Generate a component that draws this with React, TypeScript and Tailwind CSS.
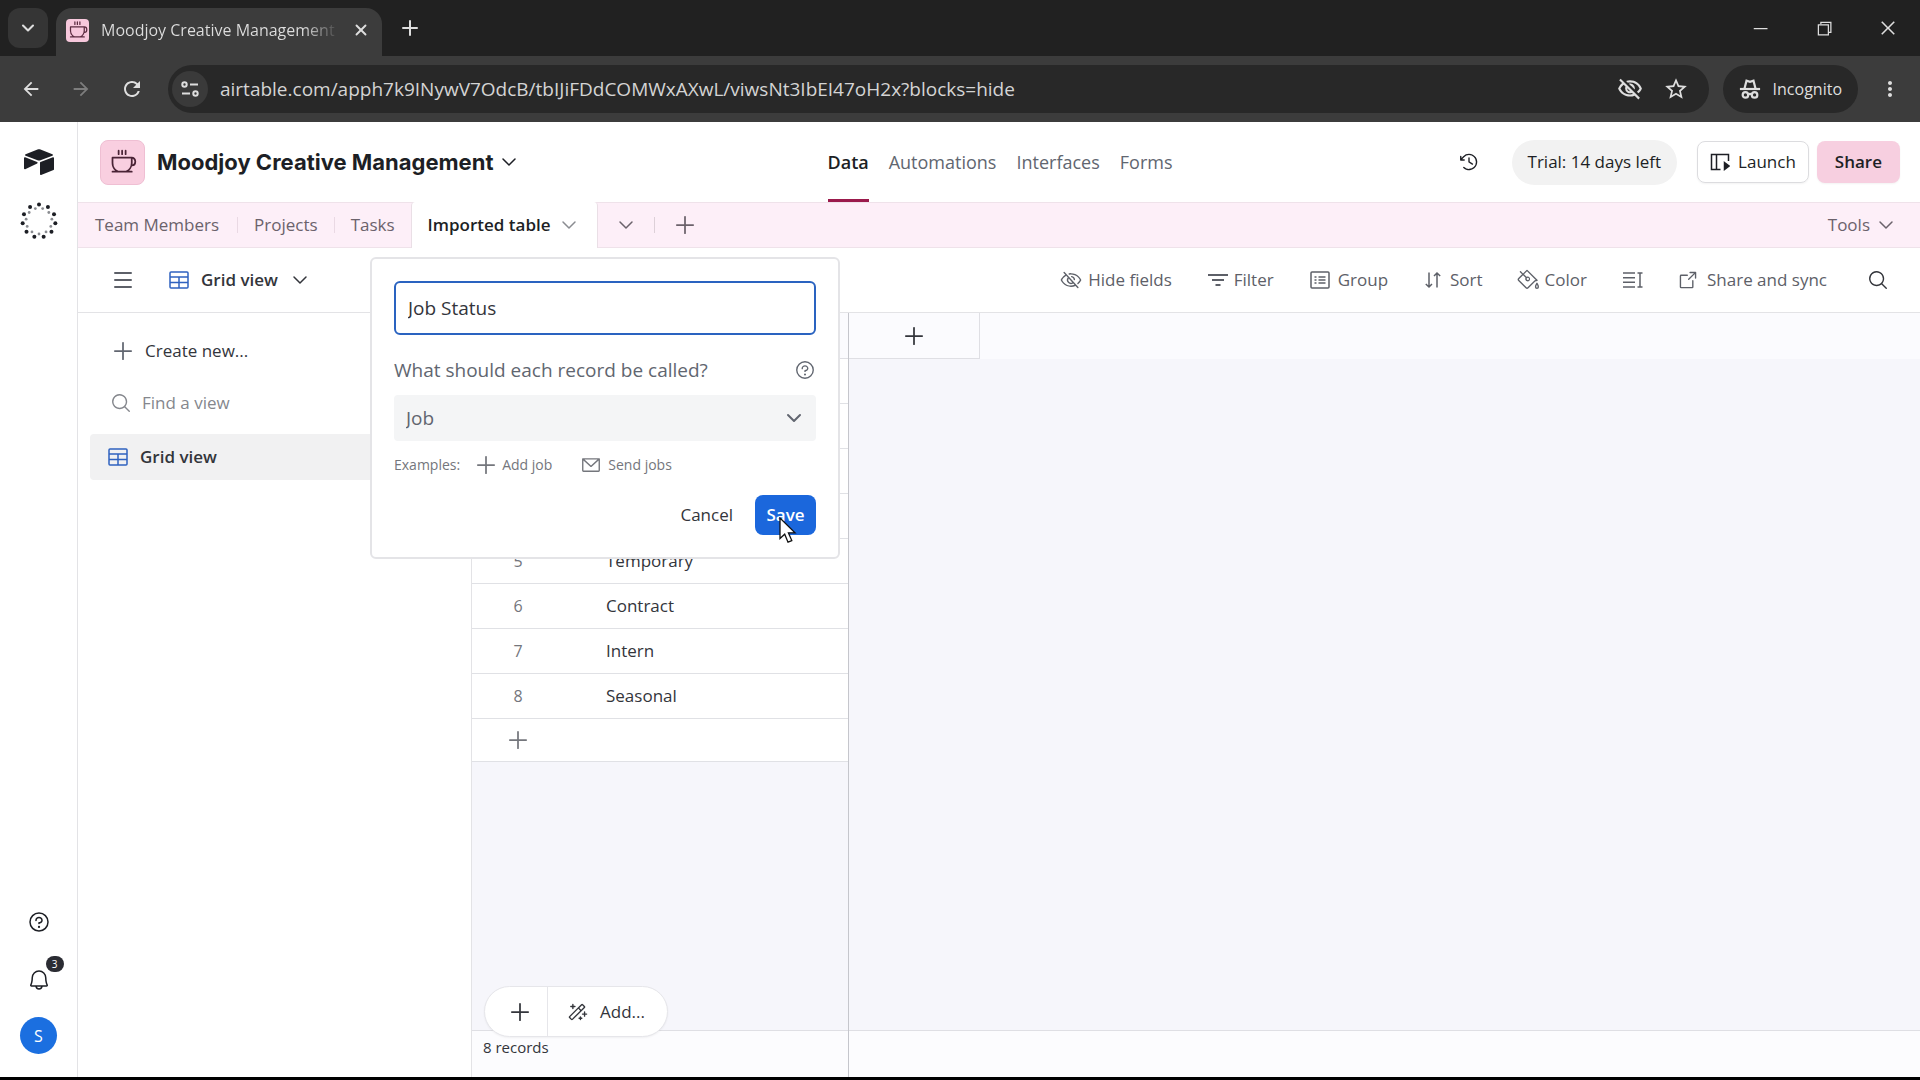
import { useState } from 'react';
import {
  PiArrowSquareOut,
  PiBell,
  PiClockCounterClockwise,
  PiCoffee,
  PiEnvelopeSimple,
  PiEyeSlash,
  PiMagicWand,
  PiMagnifyingGlass,
  PiPaintBucket,
  PiQuestion,
} from 'react-icons/pi';
import { MdArrowBack, MdArrowForward, MdMoreVert, MdOutlineVisibilityOff, MdRefresh, MdStarBorder } from 'react-icons/md';
import { VscChromeClose, VscChromeMinimize, VscChromeRestore } from 'react-icons/vsc';
import { ChevronDown, Menu, Plus, X } from 'lucide-react';

const uiFont = "font-['Open_Sans','Noto_Sans',sans-serif]";

const records = [
  { id: 1, name: '' },
  { id: 2, name: '' },
  { id: 3, name: '' },
  { id: 4, name: '' },
  { id: 5, name: 'Temporary' },
  { id: 6, name: 'Contract' },
  { id: 7, name: 'Intern' },
  { id: 8, name: 'Seasonal' },
];

function IncognitoIcon() {
  return (
    <svg viewBox="0 0 24 24" className="size-[22px]" fill="none" stroke="currentColor" strokeWidth="2.400">
      <path d="M1 12h22" />
      <path d="M6 11.500 8.200 3l3.800 1.200L15.800 3l2.200 8.500" />
      <circle cx="7" cy="18.500" r="3" />
      <circle cx="17" cy="18.500" r="3" />
      <path d="M10 18q2-1.200 4 0" />
    </svg>
  );
}

function TuneIcon() {
  return (
    <svg viewBox="0 0 20 20" className="size-5" fill="none" stroke="currentColor" strokeWidth="2">
      <circle cx="4.500" cy="5.500" r="2.200" />
      <path d="M10 5.500h8" />
      <circle cx="15.500" cy="14.500" r="2.200" />
      <path d="M2 14.500h8" />
    </svg>
  );
}

function AirtableLogo() {
  return (
    <svg viewBox="0 0 32 28" className="h-7 w-8" fill="currentColor">
      <path d="M14.500 1.500 2.600 6.200c-.7.300-.7 1.200 0 1.500l11.900 4.500c1 .4 2 .4 3 0l11.900-4.500c.7-.3.700-1.200 0-1.500L17.500 1.500c-1-.4-2-.4-3 0Z" />
      <path d="M17 14.800v11.400c0 .6.600.9 1.100.7l12.400-4.900c.3-.1.500-.4.500-.7V9.900c0-.6-.6-.9-1.100-.7l-12.400 4.900c-.3.100-.5.400-.5.700Z" />
      <path d="m14.200 15.400-3.700 1.800-8.300 4c-.5.200-1.200-.1-1.200-.7V10c0-.6.600-1 1.200-.7l11.900 4.700c.6.300.7 1.100.1 1.400Z" />
    </svg>
  );
}

function DottedRing() {
  const step = (Math.PI * 2) / 11;
  const angles = Array.from({ length: 11 }, (_, i) => i * step - Math.PI / 2);
  return (
    <svg viewBox="0 0 40 40" className="size-10">
      {angles.map((a) => (
        <g key={a}>
          <circle cx={20 + 16.500 * Math.cos(a)} cy={20 + 16.500 * Math.sin(a)} r="2" fill="#1d1f25" />
          <circle cx={20 + 13 * Math.cos(a + step / 2)} cy={20 + 13 * Math.sin(a + step / 2)} r="1.400" fill="#8a8c91" />
        </g>
      ))}
    </svg>
  );
}

function GridIcon() {
  return (
    <svg viewBox="0 0 20 18" className="h-[18px] w-5" fill="none" stroke="#2f62c0" strokeWidth="1.500">
      <rect x="1" y="1" width="18" height="16" rx="1" />
      <path d="M1 6h18M1 11.500h18M10 6v11" />
    </svg>
  );
}

function GroupIcon() {
  return (
    <svg viewBox="0 0 20 18" className="h-[18px] w-5" fill="none" stroke="currentColor" strokeWidth="1.500">
      <rect x="1" y="1" width="18" height="16" rx="1" />
      <path d="M4.500 6h2M8.500 6h7M4.500 9h2M8.500 9h7M4.500 12h2M8.500 12h7" />
    </svg>
  );
}

function FilterIcon() {
  return (
    <svg viewBox="0 0 20 14" className="h-3.5 w-5" fill="none" stroke="currentColor" strokeWidth="1.800">
      <path d="M0 2h20M4 7h12M7.500 12h5" />
    </svg>
  );
}

function SortIcon() {
  return (
    <svg viewBox="0 0 18 18" className="size-[18px]" fill="none" stroke="currentColor" strokeWidth="1.500">
      <path d="M5 1.500V16M1.800 13 5 16l3-3M13 16.500V2M10 5l3-3 3.200 3" />
    </svg>
  );
}

function RowHeightIcon() {
  return (
    <svg viewBox="0 0 20 18" className="h-[18px] w-5" fill="none" stroke="currentColor" strokeWidth="1.500">
      <path d="M0 2h12M0 6.700h12M0 11.300h12M0 16h12M17 2v14M14.500 2h5M14.500 16h5" />
    </svg>
  );
}

function LaunchIcon() {
  return (
    <svg viewBox="0 0 20 18" className="h-[18px] w-5" fill="none" stroke="currentColor" strokeWidth="1.500">
      <path d="M10.500 16.500H1.500v-15h17v6.500M6.500 1.500v15" />
      <path d="m14.500 9.500 4.500 3.500-4.500 3.500Z" fill="currentColor" />
    </svg>
  );
}

function BrowserChrome() {
  return (
    <header className="shrink-0 bg-[#212121] text-[#dedede]">
      <div className="flex h-14 items-end">
        <button aria-label="Search tabs" className="mb-2 ml-2 flex h-10 w-10 items-center justify-center rounded-xl bg-[#353535]">
          <ChevronDown className="size-5" strokeWidth={2.5} />
        </button>
        <div className="ml-2 flex h-12 w-[326px] items-center rounded-t-2xl bg-[#3c3c3c] pr-3 pb-1 pl-2.5">
          <span className="flex size-[23px] items-center justify-center rounded bg-[#f7c8dc] text-[#5b2b40]">
            <PiCoffee className="size-5" />
          </span>
          <span className="ml-3 flex-1 bg-linear-to-r from-[#dedede] from-85% to-[#3c3c3c] bg-clip-text text-base whitespace-nowrap text-transparent">
            Moodjoy Creative Management
          </span>
          <button aria-label="Close tab" className="ml-3">
            <X className="size-[18px]" strokeWidth={2.5} />
          </button>
        </div>
        <button aria-label="New tab" className="mb-4 ml-4">
          <Plus className="size-6" />
        </button>
        <div className="mb-[18px] ml-auto flex items-center gap-11 pr-[22px]">
          <button aria-label="Minimize"><VscChromeMinimize className="size-5" /></button>
          <button aria-label="Restore"><VscChromeRestore className="size-5" /></button>
          <button aria-label="Close"><VscChromeClose className="size-5" /></button>
        </div>
      </div>
      <div className="flex h-[66px] items-center bg-[#3c3c3c] pr-[18px] pl-5">
        <button aria-label="Back"><MdArrowBack className="size-[22px]" /></button>
        <button aria-label="Forward" className="ml-7 text-[#7d7d7d]"><MdArrowForward className="size-[22px]" /></button>
        <button aria-label="Reload" className="ml-7"><MdRefresh className="size-6" /></button>
        <div className="ml-6 flex h-12 flex-1 items-center rounded-full bg-[#282828] pr-5 pl-1">
          <button aria-label="Site information" className="flex size-9 items-center justify-center rounded-full bg-[#3a3a3a]">
            <TuneIcon />
          </button>
          <input
            aria-label="Address"
            className="ml-3 min-w-0 flex-1 bg-transparent text-[19px] text-[#d4d4d4] outline-none"
            defaultValue="airtable.com/apph7k9INywV7OdcB/tbIJiFDdCOMWxAXwL/viwsNt3IbEI47oH2x?blocks=hide"
          />
          <button aria-label="Third-party cookies blocked"><MdOutlineVisibilityOff className="size-[26px]" /></button>
          <button aria-label="Bookmark" className="ml-5"><MdStarBorder className="size-[26px]" /></button>
        </div>
        <button className="ml-3.5 flex h-12 items-center gap-3 rounded-full bg-[#282828] px-4 text-base">
          <IncognitoIcon />
          Incognito
        </button>
        <button aria-label="Menu" className="ml-5"><MdMoreVert className="size-6" /></button>
      </div>
    </header>
  );
}

function NavRail() {
  return (
    <nav className="flex w-[78px] shrink-0 flex-col items-center border-r border-[#e3e3e6] pt-[26px] pb-[23px] text-[#1d1f25]">
      <a href="#home" aria-label="Home"><AirtableLogo /></a>
      <div className="mt-[25px]"><DottedRing /></div>
      <button aria-label="Help" className="mt-auto"><PiQuestion className="size-6" /></button>
      <button aria-label="Notifications" className="relative mt-[34px]">
        <PiBell className="size-6" />
        <span className="absolute -top-3 left-[19px] flex h-4 w-[18px] items-center justify-center rounded-full bg-[#2b2c33] text-[10px] text-white">
          3
        </span>
      </button>
      <button className="mt-[25px] flex size-[37px] items-center justify-center rounded-full bg-[#1b6fe0] text-base text-white">S</button>
    </nav>
  );
}

function BaseHeader() {
  return (
    <div className="grid h-20 shrink-0 grid-cols-[1fr_auto_1fr] items-center pr-5 pl-[22px] text-[#1d1f25]">
      <div className="flex items-center">
        <span className="flex size-[45px] items-center justify-center rounded-lg border border-[#efbfd3] bg-[#f9cfe0] text-[#4a2436]">
          <PiCoffee className="size-7" />
        </span>
        <button className="ml-3 flex items-center gap-1 font-['Inter','Open_Sans',sans-serif] text-[22px] font-bold">
          Moodjoy Creative Management
          <ChevronDown className="size-6" strokeWidth={1.5} />
        </button>
      </div>
      <div className="flex h-full items-stretch gap-5 text-lg text-[#616670]">
        <a href="#data" className="flex items-center border-y-[3px] border-t-transparent border-b-[#9b1a4c] font-semibold text-[#1d1f25]">Data</a>
        <a href="#automations" className="flex items-center">Automations</a>
        <a href="#interfaces" className="flex items-center">Interfaces</a>
        <a href="#forms" className="flex items-center">Forms</a>
      </div>
      <div className="flex items-center justify-end">
        <button aria-label="History"><PiClockCounterClockwise className="size-[22px]" /></button>
        <span className="ml-8 flex h-[45px] items-center rounded-full bg-[#f2f2f2] px-4 text-[17px]">Trial: 14 days left</span>
        <button className="ml-5 flex h-[42px] items-center gap-2 rounded-lg border border-[#dcdcdf] px-3 text-[17px] shadow-xs">
          <LaunchIcon />
          Launch
        </button>
        <button className="ml-2 h-[42px] rounded-lg bg-[#f7cfe0] px-[18px] text-[17px] font-semibold shadow-xs">Share</button>
      </div>
    </div>
  );
}

function TableTabs() {
  return (
    <div className="flex h-[46px] shrink-0 items-center border-y border-[#efe2ea] bg-[#fdeff8] text-[17px] text-[#6b626b]">
      <button className="pr-[18px] pl-[17px]">Team Members</button>
      <span className="h-4 w-px bg-[#ead9e4]" />
      <button className="px-4">Projects</button>
      <span className="h-4 w-px bg-[#ead9e4]" />
      <button className="px-4">Tasks</button>
      <button className="-my-px flex h-[46px] items-center gap-1.5 rounded-t-sm border-x border-[#eadfe6] bg-white px-4 font-semibold text-[#1d1f25]">
        Imported table
        <ChevronDown className="size-6 text-[#8a8c91]" strokeWidth={1.5} />
      </button>
      <button aria-label="All tables" className="px-4"><ChevronDown className="size-6" strokeWidth={1.5} /></button>
      <span className="h-4 w-px bg-[#ddd0d8]" />
      <button aria-label="Add table" className="ml-4"><Plus className="size-7" strokeWidth={1.5} /></button>
      <button className="mr-[22px] ml-auto flex items-center gap-1">
        Tools
        <ChevronDown className="size-6" strokeWidth={1.5} />
      </button>
    </div>
  );
}

function ViewBar() {
  return (
    <div className="flex h-[65px] shrink-0 items-center border-b border-[#e3e3e6] pr-[31px] pl-[33px] text-[17px] text-[#5d6068]">
      <button aria-label="Toggle sidebar"><Menu className="size-6" strokeWidth={2} /></button>
      <button className="ml-[34px] flex items-center font-semibold text-[#33353b]">
        <GridIcon />
        <span className="ml-3">Grid view</span>
        <ChevronDown className="ml-2.5 size-6" strokeWidth={1.5} />
      </button>
      <div className="ml-auto flex items-center">
        <button className="flex items-center gap-1.5"><PiEyeSlash className="size-[22px]" />Hide fields</button>
        <button className="ml-9 flex items-center gap-1.5"><FilterIcon />Filter</button>
        <button className="ml-9 flex items-center gap-2"><GroupIcon />Group</button>
        <button className="ml-9 flex items-center gap-2"><SortIcon />Sort</button>
        <button className="ml-[34px] flex items-center gap-1.5"><PiPaintBucket className="size-[22px]" />Color</button>
        <button aria-label="Row height" className="ml-9"><RowHeightIcon /></button>
        <button className="ml-[34px] flex items-center gap-2"><PiArrowSquareOut className="size-[22px]" />Share and sync</button>
        <button aria-label="Search" className="ml-10 text-[#33353b]"><PiMagnifyingGlass className="size-[22px]" /></button>
      </div>
    </div>
  );
}

function ViewSidebar() {
  return (
    <aside className="w-[394px] shrink-0 border-r border-[#e3e3e6] px-3 pt-4 text-[17px]">
      <button className="flex h-11 items-center gap-2 pl-[19px] text-[#33353b]">
        <Plus className="size-7 text-[#616670]" strokeWidth={1.5} />
        Create new...
      </button>
      <label className="mt-2 flex h-11 items-center gap-2.5 pl-5 text-[#85878d]">
        <PiMagnifyingGlass className="size-[22px]" />
        <input aria-label="Find a view" placeholder="Find a view" className="w-60 bg-transparent outline-none placeholder:text-[#85878d]" />
      </label>
      <button className="mt-[9px] flex h-[46px] w-full items-center gap-3 rounded bg-[#f1f1f2] pl-[18px] font-semibold text-[#33353b]">
        <GridIcon />
        Grid view
      </button>
    </aside>
  );
}

function RecordGrid() {
  return (
    <div className="relative flex min-w-0 flex-1 bg-[#f6f6fb] text-[17px] text-[#33353b]">
      <div className="flex w-[377px] shrink-0 flex-col border-r border-[#c5c6cc]">
        <table className="w-full border-collapse bg-white">
          <thead>
            <tr className="h-[45px] border-b border-[#dfdfe4] bg-[#fbfbfe]">
              <th className="w-[92px]" aria-label="Row" />
              <th aria-label="Name" />
            </tr>
          </thead>
          <tbody>
            {records.map((record) => (
              <tr key={record.id} className="h-[45px] border-b border-[#e0e1e5]">
                <td className="w-[92px] text-center text-base text-[#74767c]">{record.name ? record.id : null}</td>
                <td className="pl-[42px]">{record.name}</td>
              </tr>
            ))}
            <tr className="h-[43px] border-b border-[#e0e1e5]">
              <td className="w-[92px]">
                <button aria-label="Add record" className="flex w-full justify-center text-[#74767c]">
                  <Plus className="size-7" strokeWidth={1.5} />
                </button>
              </td>
              <td />
            </tr>
          </tbody>
        </table>
        <div className="mt-auto h-[47px] border-t border-[#dfdfe4] bg-[#fcfcfe] pt-1 pl-[11px] text-[15px] leading-6">8 records</div>
      </div>
      <div className="flex min-w-0 flex-1 flex-col">
        <div className="h-[46px] bg-[#fbfbfe]">
          <button aria-label="Add field" className="flex h-full w-[131px] items-center justify-center border-r border-b border-[#dfdfe4]">
            <Plus className="size-7" strokeWidth={1.5} />
          </button>
        </div>
        <div className="mt-auto h-[47px] border-t border-[#dfdfe4] bg-[#fcfcfe]" />
      </div>
      {/* floating add bar */}
      <div className="absolute bottom-10 left-3 flex h-[51px] items-center rounded-full border border-[#e6e6ea] bg-white shadow-xs">
        <button aria-label="Add record" className="flex h-full w-[63px] items-center justify-center border-r border-[#e6e6ea] pl-2">
          <Plus className="size-7" strokeWidth={1.5} />
        </button>
        <button className="flex h-full items-center gap-3 pr-[22px] pl-[18px]">
          <PiMagicWand className="size-[22px]" />
          Add...
        </button>
      </div>
    </div>
  );
}

function RenameDialog() {
  const [name, setName] = useState('Job Status');
  return (
    <form
      className="absolute top-[135px] left-[292px] w-[470px] rounded-md border-2 border-[#e4e4e7] bg-white px-[22px] pt-[22px] pb-[22px] text-[17px] text-[#33353b]"
      onSubmit={(e) => e.preventDefault()}
    >
      <input
        aria-label="Table name"
        value={name}
        onChange={(e) => setName(e.target.value)}
        className="h-[54px] w-full rounded-md border-2 border-[#2a63c0] px-3 text-[19px] outline-none"
      />
      <div className="mt-[22px] flex h-[26px] items-center justify-between text-[#616670]">
        <label htmlFor="record-name" className="text-[19px]">What should each record be called?</label>
        <PiQuestion className="size-[22px]" />
      </div>
      <div className="relative mt-3">
        <select id="record-name" className="h-[46px] w-full appearance-none rounded bg-[#f4f5f6] px-3 text-[19px] text-[#616670]">
          <option>Job</option>
        </select>
        <ChevronDown className="pointer-events-none absolute top-[11px] right-2.5 size-6 text-[#616670]" />
      </div>
      <div className="mt-3 flex h-6 items-center text-sm text-[#74767c]">
        Examples:
        <Plus className="ml-3 size-7" strokeWidth={1.5} />
        <span className="ml-0.5">Add job</span>
        <PiEnvelopeSimple className="ml-7 size-[22px]" />
        <span className="ml-1.5">Send jobs</span>
      </div>
      <div className="mt-[18px] flex h-10 items-center justify-end gap-[22px]">
        <button type="button">Cancel</button>
        <button type="submit" className="relative h-10 w-[61px] rounded-lg bg-[#1b67dc] font-semibold text-white">
          Save
          {/* pointer */}
          <svg viewBox="0 0 18 27" className="absolute top-[22px] left-6 h-[27px] w-[18px]">
            <path d="M1 1v20.500l4.700-4.300 3.300 8 3.800-1.600-3.400-7.800H16Z" fill="#fff" stroke="#111" strokeWidth="1.300" />
          </svg>
        </button>
      </div>
    </form>
  );
}

export default function App() {
  return (
    <div className={`flex h-screen flex-col overflow-hidden border-b-[3px] border-black bg-white ${uiFont}`}>
      <BrowserChrome />
      <div className="flex min-h-0 flex-1">
        <NavRail />
        <main className="relative flex min-w-0 flex-1 flex-col">
          <BaseHeader />
          <TableTabs />
          <ViewBar />
          <div className="flex min-h-0 flex-1">
            <ViewSidebar />
            <RecordGrid />
          </div>
          <RenameDialog />
        </main>
      </div>
    </div>
  );
}
